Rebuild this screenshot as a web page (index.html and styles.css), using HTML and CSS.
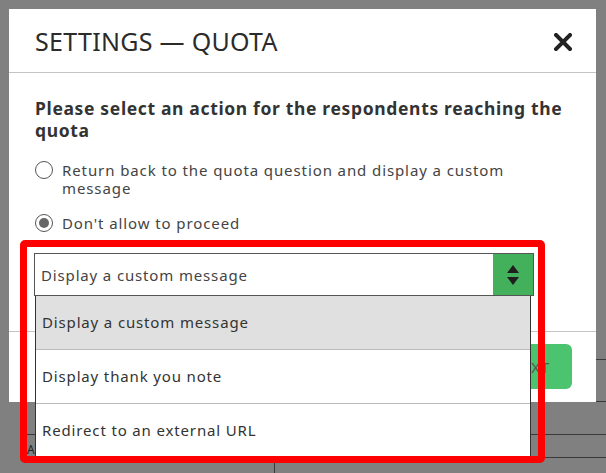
FILE: index.html
```html
<!DOCTYPE html>
<html lang="en">
<head>
    <meta charset="UTF-8">
    <meta name="viewport" content="width=device-width, initial-scale=1.0">
    <title>Settings - Quota</title>
    <link rel="stylesheet" href="styles.css">
</head>
<body>

    <div class="page">
        <div class="page-row"></div>
        <div class="page-row mid"></div>
        <div class="page-row short">
            <span class="cell-text">A</span>
        </div>
        <div class="page-row table-row">
            <div class="cell first"></div>
            <div class="cell"></div>
        </div>
    </div>

    <div class="modal">
        <div class="modal-header">
            <h2>SETTINGS — QUOTA</h2>
            <svg class="close" width="18" height="18" viewBox="0 0 18 18">
                <path d="M2 2 L16 16 M16 2 L2 16" stroke="#222" stroke-width="4" stroke-linecap="square"/>
            </svg>
        </div>

        <div class="modal-body">
            <p class="question">Please select an action for the respondents reaching the quota</p>

            <label class="radio">
                <span class="dot"></span>
                <span class="radio-text">Return back to the quota question and display a custom message</span>
            </label>

            <label class="radio">
                <span class="dot checked"></span>
                <span class="radio-text">Don't allow to proceed</span>
            </label>

            <div class="select-wrap">
                <div class="select">
                    <span class="select-value">Display a custom message</span>
                    <span class="select-btn">
                        <svg width="14" height="24" viewBox="0 0 14 24">
                            <path d="M7 2 L13 10 L1 10 Z" fill="#1f1f1f"/>
                            <path d="M1 14 L13 14 L7 22 Z" fill="#1f1f1f"/>
                        </svg>
                    </span>
                </div>
                <ul class="options">
                    <li class="active">Display a custom message</li>
                    <li>Display thank you note</li>
                    <li>Redirect to an external URL</li>
                </ul>
            </div>
        </div>

        <div class="modal-footer">
            <button class="next-btn">NEXT</button>
        </div>
    </div>

    <div class="highlight"></div>

</body>
</html>
```

FILE: styles.css
```css
body {
    margin: 0;
    background-color: #808080;
    font-family: "Noto Sans", Arial, sans-serif;
    color: #333333;
    height: 473px;
    overflow: hidden;
}

/* page behind the overlay */
.page {
    padding-top: 359px;
    padding-left: 22px;
}

.page-row {
    border-top: 1px solid #3a3a3a;
    height: 41px;
}

.page-row.mid {
    height: 32px;
}

.page-row.short {
    height: 22px;
}

.cell-text {
    display: block;
    padding: 9px 0 0 5px;
    font-size: 12px;
    line-height: 12px;
    color: #222222;
}

.table-row {
    display: flex;
    height: 15px;
}

.cell {
    width: 252px;
}

.cell.first {
    border-right: 1px solid #3a3a3a;
}

/* modal */
.modal {
    position: absolute;
    left: 9px;
    top: 9px;
    width: 587px;
    height: 393px;
    background-color: #ffffff;
    display: flex;
    flex-direction: column;
}

.modal-header {
    flex: none;
    height: 63px;
    border-bottom: 1px solid #c4c4c4;
    display: flex;
    align-items: center;
    justify-content: space-between;
    padding: 0 24px 0 26px;
}

.modal-header h2 {
    margin: 0;
    font-size: 25px;
    font-weight: 400;
    letter-spacing: 0.3px;
    color: #2b2b2b;
}

.close {
    margin-top: 2px;
}

.modal-body {
    flex: 1;
    padding: 24px 26px 0;
}

.question {
    margin: 0 0 20px;
    font-size: 17.5px;
    font-weight: 700;
    line-height: 22px;
    letter-spacing: 0.65px;
    color: #333333;
}

.radio {
    display: flex;
    align-items: flex-start;
    gap: 9px;
    font-size: 15px;
    line-height: 18px;
    letter-spacing: 0.9px;
    color: #444444;
    margin-bottom: 17px;
}

.radio-text {
    max-width: 470px;
}

.dot {
    flex: none;
    width: 16px;
    height: 16px;
    border: 1.5px solid #555555;
    border-radius: 50%;
    position: relative;
}

.dot.checked::after {
    content: "";
    position: absolute;
    left: 3px;
    top: 3px;
    width: 10px;
    height: 10px;
    border-radius: 50%;
    background-color: #666666;
}

.select-wrap {
    position: relative;
    width: 500px;
    margin-left: -1px;
    margin-top: 21px;
}

.select {
    height: 41px;
    border: 1px solid #555555;
    display: flex;
    align-items: center;
    justify-content: space-between;
}

.select-value {
    padding-left: 6px;
    font-size: 15px;
    letter-spacing: 0.85px;
    color: #444444;
}

.select-btn {
    width: 40px;
    height: 41px;
    background-color: #43b05c;
    display: flex;
    align-items: center;
    justify-content: center;
}

.options {
    position: absolute;
    left: 1px;
    top: 43px;
    width: 494px;
    margin: 0;
    padding: 0;
    list-style: none;
    background-color: #ffffff;
    border: 1px solid #333333;
    border-top: none;
    z-index: 2;
}

.options li {
    height: 53px;
    line-height: 53px;
    padding-left: 6px;
    font-size: 15px;
    letter-spacing: 0.85px;
    color: #333333;
    border-bottom: 1px solid #bbbbbb;
}

.options li:last-child {
    border-bottom: none;
}

.options li.active {
    background-color: #e0e0e0;
}

.modal-footer {
    flex: none;
    border-top: 1px solid #c4c4c4;
    height: 71px;
    display: flex;
    justify-content: flex-end;
    align-items: flex-start;
    padding: 12px 24px 0;
    box-sizing: border-box;
}

.next-btn {
    width: 86px;
    height: 45px;
    border: none;
    border-radius: 6px;
    background-color: #4cc46f;
    color: #555555;
    font-family: inherit;
    font-size: 15px;
    letter-spacing: 0.8px;
    text-align: right;
    padding-right: 22px;
}

/* red annotation frame */
.highlight {
    position: absolute;
    left: 20px;
    top: 240px;
    width: 511px;
    height: 209px;
    border: 7px solid #ff0000;
    border-radius: 5px;
    z-index: 5;
}
```
